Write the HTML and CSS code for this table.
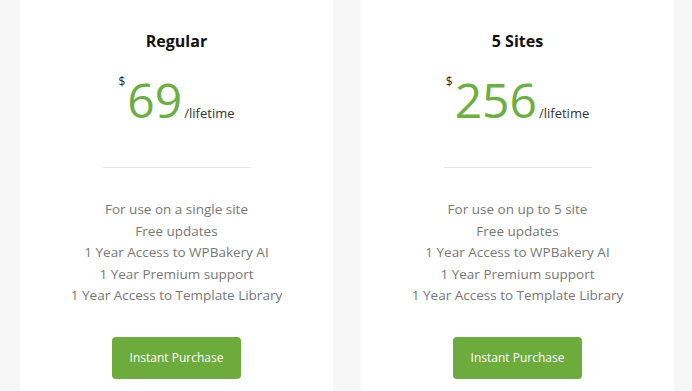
FILE: index.html
```html
<!DOCTYPE html>
<html>
<head>
<meta charset="utf-8">
<link rel="stylesheet" href="styles.css">
</head>
<body>
<div class="plans">
  <div class="card">
    <h2 class="title">Regular</h2>
    <div class="price"><span class="currency">$</span><span class="amount">69</span><span class="period">/lifetime</span></div>
    <div class="divider"></div>
    <ul class="features">
      <li>For use on a single site</li>
      <li>Free updates</li>
      <li>1 Year Access to WPBakery AI</li>
      <li>1 Year Premium support</li>
      <li>1 Year Access to Template Library</li>
    </ul>
    <a class="btn" href="#">Instant Purchase</a>
  </div>
  <div class="card">
    <h2 class="title">5 Sites</h2>
    <div class="price"><span class="currency">$</span><span class="amount">256</span><span class="period">/lifetime</span></div>
    <div class="divider"></div>
    <ul class="features">
      <li>For use on up to 5 site</li>
      <li>Free updates</li>
      <li>1 Year Access to WPBakery AI</li>
      <li>1 Year Premium support</li>
      <li>1 Year Access to Template Library</li>
    </ul>
    <a class="btn" href="#">Instant Purchase</a>
  </div>
</div>
</body>
</html>
```
FILE: styles.css
```css
html, body {
  margin: 0;
  padding: 0;
  background: #f7f7f7;
  font-family: "Open Sans", "Noto Sans", sans-serif;
}
.plans {
  display: flex;
  gap: 28px;
  padding-left: 20px;
  height: 391px;
  overflow: hidden;
}
.card {
  width: 313px;
  height: 391px;
  background: #fff;
  box-sizing: border-box;
  padding-top: 29px;
  display: flex;
  flex-direction: column;
  align-items: center;
  text-align: center;
}
.title {
  margin: 0;
  font-size: 16px;
  line-height: 24px;
  font-weight: 700;
  color: #111;
}
.price {
  margin-top: 23px;
  display: flex;
  align-items: baseline;
  justify-content: center;
  line-height: 1;
}
.currency {
  align-self: flex-start;
  font-size: 12px;
  color: #222;
  margin-top: 0;
  margin-right: 2px;
}
.amount {
  font-size: 48px;
  color: #6cae43;
}
.period {
  font-size: 13px;
  color: #333;
  margin-left: 2px;
}
.divider {
  width: 148px;
  height: 1px;
  background: #e8e8e8;
  margin-top: 43px;
}
.features {
  list-style: none;
  margin: 31px 0 0;
  padding: 0;
  font-size: 13.5px;
  line-height: 21.5px;
  color: #777;
}
.btn {
  margin-top: 30px;
  width: 129px;
  height: 42px;
  display: flex;
  align-items: center;
  justify-content: center;
  background: #6cab3c;
  color: #fff;
  text-decoration: none;
  font-size: 12px;
  border-radius: 4px;
}
```
